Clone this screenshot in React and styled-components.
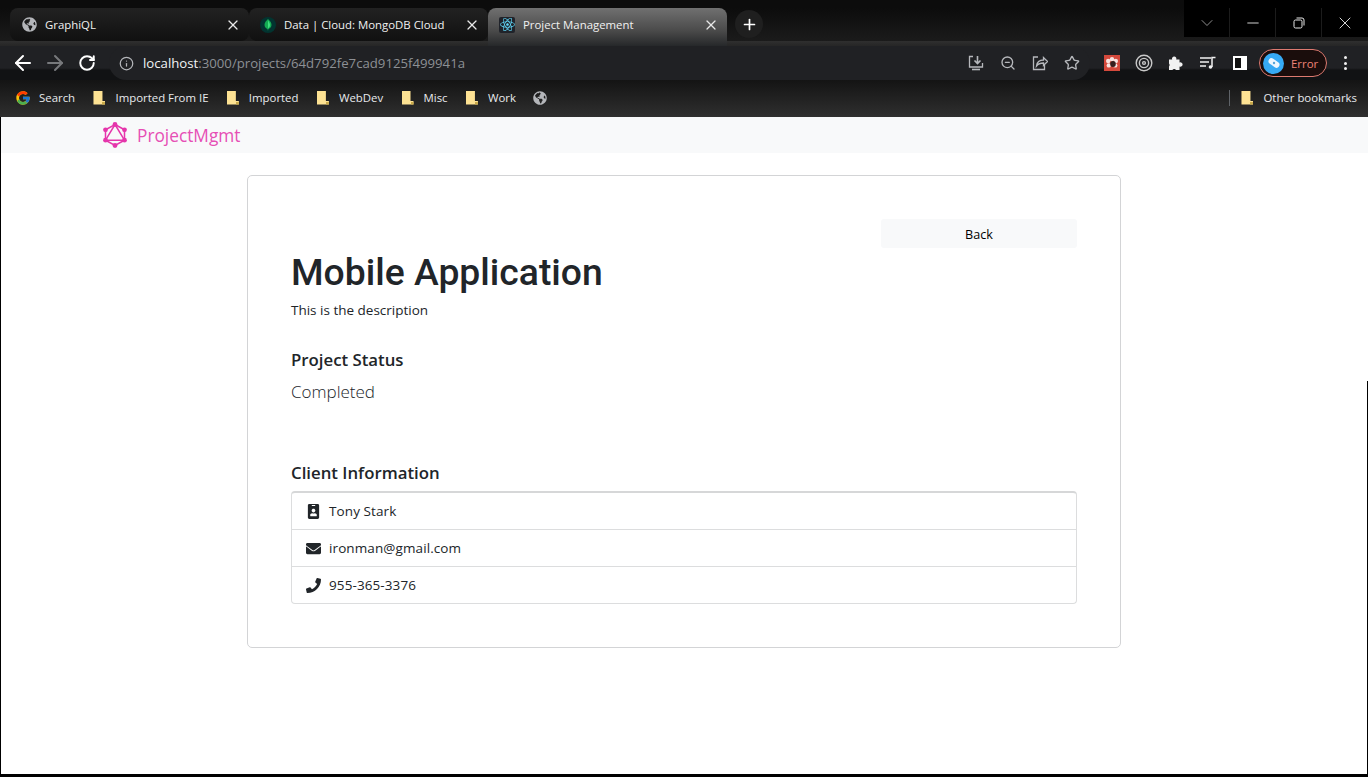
import styled, { createGlobalStyle } from "styled-components";
import { ArrowLeft, ArrowRight, RotateCw, Info, ZoomOut, Star, X, Plus, ChevronDown, Minus } from "lucide-react";
import { FaIdBadge, FaEnvelope, FaPhone, FaReact, FaGlobeAmericas } from "react-icons/fa";
import { FcGoogle } from "react-icons/fc";

const GlobalStyle = createGlobalStyle`
  html, body { margin: 0; padding: 0; background: #000; }
  * { box-sizing: border-box; }
  body { font-family: "Open Sans", "Noto Sans", sans-serif; }
`;

const Frame = styled.div`
  position: relative;
  width: 1368px;
  height: 777px;
  overflow: hidden;
  display: flex;
  flex-direction: column;
  background: #000;
`;

const TabStrip = styled.div`
  height: 46px;
  padding: 8px 0 0 10px;
  display: flex;
  align-items: flex-start;
  background: linear-gradient(#0c0c0c 8px, #1b1b1b 41px, #2f2f2f 41px, #262626 46px);
`;

const Tab = styled.div`
  width: 239px;
  height: ${(p) => (p.$active ? 38 : 33)}px;
  padding: 0 8px ${(p) => (p.$active ? 5 : 0)}px 11px;
  display: flex;
  align-items: center;
  gap: 8px;
  color: #f1f1f1;
  font-size: 11.4px;
  border-radius: 8px 8px ${(p) => (p.$active ? "0 0" : "8px 8px")};
  background: ${(p) =>
    p.$active
      ? "linear-gradient(#707070, #4a4a4a 60%, #26282a)"
      : "linear-gradient(#222222, #101010)"};
`;

const TabTitle = styled.span`
  flex: 1;
  white-space: nowrap;
  overflow: hidden;
`;

const Favicon = styled.span`
  width: 16px;
  height: 16px;
  flex: none;
  display: flex;
  align-items: center;
  justify-content: center;
  border-radius: ${(p) => (p.$round ? "50%" : "2px")};
  background: ${(p) => p.$bg || "transparent"};
  color: ${(p) => p.$color || "#b4b6ba"};
`;

const GlobeBookmark = styled(Favicon)`
  margin-left: -2px;
`;

const NewTab = styled.button`
  width: 28px;
  height: 28px;
  margin: 2px 0 0 8px;
  padding: 0;
  border: 0;
  border-radius: 50%;
  display: flex;
  align-items: center;
  justify-content: center;
  background: #1f1f1f;
  color: #fff;
`;

const WindowControls = styled.div`
  margin-left: auto;
  margin-top: -8px;
  height: 37px;
  padding-top: 8px;
  display: flex;
  background: #000;
  flex: none;
`;

const WindowButton = styled.div`
  width: 46px;
  display: flex;
  align-items: center;
  justify-content: center;
  color: #e8e8e8;
  border-right: ${(p) => (p.$last ? "0" : "1px solid #1c1c1c")};
`;

const RestoreIcon = () => (
  <svg width="12" height="12" viewBox="0 0 12 12" fill="none" stroke="#e8e8e8" strokeWidth="1">
    <rect x="1" y="3" width="8" height="8" rx="1.5" />
    <path d="M3.5 1h5.5a2 2 0 0 1 2 2v5.5" />
  </svg>
);

const Toolbar = styled.div`
  height: 34px;
  padding-left: 7px;
  display: flex;
  align-items: center;
  background: linear-gradient(#202124 22px, #111214 24px);
`;

const NavIcons = styled.div`
  width: 102px;
  display: grid;
  grid-template-columns: repeat(3, 32px);
  justify-items: center;
  align-items: center;
  color: #fff;
  flex: none;
`;

const Omnibox = styled.div`
  width: 981px;
  height: 34px;
  padding: 0 10px;
  border-radius: 17px;
  display: flex;
  align-items: center;
  background: #202124;
  color: #b4b6ba;
  flex: none;
`;

const Url = styled.div`
  margin-left: 9px;
  flex: 1;
  font-size: 13.2px;
  color: #8d9095;
  white-space: nowrap;
`;

const Host = styled.span`
  color: #f1f3f4;
`;

const OmniActions = styled.div`
  display: flex;
  align-items: center;
  gap: 16px;
  color: #b6b8bc;
`;

const ExtIcons = styled.div`
  display: flex;
  align-items: center;
  padding-left: 6px;
  flex: none;
  color: #f1f1f1;
`;

const ExtSlot = styled.span`
  width: 32px;
  display: flex;
  justify-content: center;
  align-items: center;
`;

const ExtBug = styled.span`
  width: 16px;
  height: 16px;
  background: #d4493c;
  display: flex;
  align-items: center;
  justify-content: center;
`;

const ProfileChip = styled.div`
  width: 68px;
  height: 28px;
  margin-left: 3px;
  padding: 0 0 0 3px;
  border-radius: 14px;
  border: 1px solid #dd7a70;
  background: #1a0d0c;
  display: flex;
  align-items: center;
  gap: 7px;
  font-size: 11.4px;
  color: #ee8377;
`;

const Avatar = styled.span`
  width: 21px;
  height: 21px;
  border-radius: 50%;
  background: #36a9f4;
  display: flex;
  align-items: center;
  justify-content: center;
`;

const Dots = styled.div`
  margin-left: 17px;
  display: flex;
  flex-direction: column;
  gap: 2.5px;
`;

const Dot = styled.span`
  width: 3px;
  height: 3px;
  border-radius: 50%;
  background: #f1f1f1;
`;

const Bookmarks = styled.div`
  height: 37px;
  padding: 0 11px 2px 15px;
  display: flex;
  align-items: center;
  font-size: 11.4px;
  color: #e8eaed;
  background: linear-gradient(#141414, #2f2f2f);
`;

const Bookmark = styled.div`
  display: flex;
  align-items: center;
  gap: ${(p) => p.$gap || 10}px;
  margin-right: ${(p) => (p.$end ? 0 : 18.4)}px;
  white-space: nowrap;
`;

const FolderIcon = styled.span`
  position: relative;
  width: 12px;
  height: 14px;
  flex: none;
  background: #fde293;
  clip-path: polygon(0 0, 75% 0, 75% 75%, 100% 75%, 100% 100%, 0 100%);

  &::after {
    content: "";
    position: absolute;
    right: 0;
    bottom: 0;
    width: 3px;
    height: 3px;
    background: #c9a94a;
  }
`;

const BookmarkDivider = styled.span`
  width: 1px;
  height: 16px;
  margin-left: auto;
  margin-right: 11px;
  background: #5f6368;
`;

const Page = styled.div`
  flex: 1;
  margin: 0 0 3px 1px;
  background: #fff;
  display: flex;
  flex-direction: column;
  color: #212529;
`;

const Navbar = styled.nav`
  height: 36px;
  padding-left: 100px;
  display: flex;
  align-items: center;
  gap: 8px;
  background: #f8f9fa;
`;

const BrandName = styled.span`
  font-size: 17.3px;
  color: #e64fb5;
`;

const Card = styled.section`
  width: 874px;
  height: 473px;
  margin: 22px 0 0 246px;
  padding: 43px 43px 0;
  border: 1px solid #d3d4d6;
  border-radius: 5px;
`;

const BackRow = styled.div`
  display: flex;
  justify-content: flex-end;
`;

const BackButton = styled.a`
  width: 196px;
  height: 29px;
  padding-top: 1px;
  border-radius: 3px;
  display: flex;
  align-items: center;
  justify-content: center;
  font-size: 12.6px;
  color: #000;
  background: #f8f9fa;
`;

const Title = styled.h1`
  margin: 0;
  height: 48px;
  font-family: Roboto, "Open Sans", sans-serif;
  font-size: 37.3px;
  line-height: 48px;
  font-weight: 500;
`;

const Description = styled.p`
  margin: 4px 0 0;
  font-size: 13.5px;
  line-height: 20px;
`;

const Heading = styled.h5`
  margin: ${(p) => p.$top}px 0 0;
  font-size: 16.8px;
  line-height: 20px;
  font-weight: 600;
`;

const Status = styled.p`
  margin: 10px 0 0;
  font-size: 17px;
  line-height: 24px;
  font-weight: 300;
`;

const ClientList = styled.ul`
  margin: 8px 0 0;
  padding: 0;
  list-style: none;
  border: 1px solid #dcddde;
  border-top: 2px solid #d6d7d8;
  border-radius: 4px;
`;

const ClientRow = styled.li`
  height: ${(p) => (p.$first ? 36 : 37)}px;
  padding-left: 14px;
  display: flex;
  align-items: center;
  gap: 8px;
  font-size: 13.5px;
  letter-spacing: 0.1px;
  border-top: ${(p) => (p.$first ? "0" : "1px solid #dcddde")};
`;

const RowIcon = styled.span`
  width: 15px;
  display: flex;
  justify-content: center;
  color: #212529;
`;

// right edge of the desktop window peeking through under the browser
const EdgeLine = styled.span`
  position: absolute;
  right: 0;
  top: 381px;
  bottom: 0;
  width: 1px;
  background: #000;
`;

const ShareIcon = () => (
  <svg width="16" height="16" viewBox="0 0 16 16" fill="none" stroke="currentColor" strokeWidth="1.3">
    <path d="M6 2H1.500v12.500h11V10" />
    <path d="M4.500 11c.5-4 3.500-6 7-6V2.500l4 4-4 4V8C8.500 8 6 9 4.500 11z" />
  </svg>
);

const SaveIcon = () => (
  <svg width="16" height="16" viewBox="0 0 16 16" fill="none" stroke="currentColor" strokeWidth="1.3">
    <path d="M5 1.500H1.500V12h13V8" />
    <path d="M9.500 1v7M6.500 5.500l3 3 3-3" strokeWidth="1.6" />
    <path d="M4 14.500h8" strokeWidth="1.6" />
  </svg>
);

const TargetIcon = () => (
  <svg width="18" height="18" viewBox="0 0 18 18" fill="none" stroke="#c9c9c9" strokeWidth="1.4">
    <circle cx="9" cy="9" r="7.800" />
    <circle cx="9" cy="9" r="4.600" />
    <circle cx="9" cy="9" r="1.400" />
  </svg>
);

const PuzzleIcon = () => (
  <svg width="16" height="16" viewBox="0 0 16 16" fill="#f1f1f1">
    <path d="M1 4.500h3.200a2.200 2.200 0 1 1 4 0H11.500v3a2.200 2.200 0 1 1 0 4V15H8a2.200 2.200 0 0 0-3.600 0H1v-3.500a2.200 2.200 0 0 0 0-3z" />
  </svg>
);

const PlaylistIcon = () => (
  <svg width="16" height="14" viewBox="0 0 16 14" fill="none" stroke="#f1f1f1" strokeWidth="1.500">
    <path d="M0 2h11M0 6h9M0 10h6" />
    <path d="M12 11V1.500h3.500" />
    <circle cx="10.500" cy="11" r="1.800" fill="#f1f1f1" stroke="none" />
  </svg>
);

const SidePanelIcon = () => (
  <svg width="14" height="14" viewBox="0 0 14 14">
    <rect width="14" height="14" fill="#fff" />
    <rect x="2" y="2" width="6" height="10" fill="#111" />
  </svg>
);

const BugIcon = () => (
  <svg width="14" height="14" viewBox="0 0 14 14">
    <g fill="#f7e3e0">
      <circle cx="7" cy="3.200" r="2.200" />
      <circle cx="3.200" cy="5" r="2.200" />
      <circle cx="10.800" cy="5" r="2.200" />
      <circle cx="3.800" cy="9.400" r="2.200" />
      <circle cx="10.200" cy="9.400" r="2.200" />
    </g>
    <ellipse cx="8" cy="8" rx="2.800" ry="3" fill="#35201f" />
  </svg>
);

const PillIcon = () => (
  <svg width="14" height="14" viewBox="0 0 14 14">
    <rect x="1" y="4" width="12" height="6" rx="3" fill="#eef7fe" transform="rotate(35 7 7)" />
    <circle cx="7" cy="7" r="1.200" fill="#5aa4d8" />
  </svg>
);

const LeafIcon = () => (
  <svg width="8" height="12" viewBox="0 0 8 12">
    <path d="M4 0c2 2 3.500 3.600 3.500 6S5.500 9.500 4.300 10.200L4 12l-.4-1.800C2.400 9.500.5 8.400.5 6S2 2 4 0z" fill="#13aa52" />
    <path d="M4 1.500c1 1.500 2 2.700 2 4.500S5 8.500 4 9.500z" fill="#3fe07f" />
  </svg>
);

const Logo = () => (
  <svg width="28" height="28" viewBox="0 0 28 28" fill="none" stroke="#e535ab" strokeWidth="1.500">
    <path d="M14 3.500L23.500 8.800V19.200L14 24.500L4.500 19.200V8.800z" />
    <path d="M14 3.500L23.500 19.200H4.500z" />
    <g fill="#e535ab" stroke="none">
      <circle cx="14" cy="3.500" r="2.400" />
      <circle cx="23.500" cy="8.800" r="2.400" />
      <circle cx="23.500" cy="19.200" r="2.400" />
      <circle cx="14" cy="24.500" r="2.400" />
      <circle cx="4.500" cy="19.200" r="2.400" />
      <circle cx="4.500" cy="8.800" r="2.400" />
    </g>
  </svg>
);

const bookmarks = ["Imported From IE", "Imported", "WebDev", "Misc", "Work"];

const App = () => {
  return (
    <Frame>
      <GlobalStyle />
      <TabStrip>
        <Tab>
          <Favicon>
            <FaGlobeAmericas size={15} />
          </Favicon>
          <TabTitle>GraphiQL</TabTitle>
          <X size={16} strokeWidth={1.8} color="#e8e8e8" />
        </Tab>
        <Tab>
          <Favicon $bg="#023430" $round>
            <LeafIcon />
          </Favicon>
          <TabTitle>Data | Cloud: MongoDB Cloud</TabTitle>
          <X size={16} strokeWidth={1.8} color="#e8e8e8" />
        </Tab>
        <Tab $active>
          <Favicon $bg="#20232a" $color="#61dafb">
            <FaReact size={15} />
          </Favicon>
          <TabTitle>Project Management</TabTitle>
          <X size={16} strokeWidth={1.8} color="#e8e8e8" />
        </Tab>
        <NewTab>
          <Plus size={17} strokeWidth={2.4} />
        </NewTab>
        <WindowControls>
          <WindowButton>
            <ChevronDown size={20} strokeWidth={1} color="#aaaaaa" />
          </WindowButton>
          <WindowButton>
            <Minus size={18} strokeWidth={1.2} />
          </WindowButton>
          <WindowButton>
            <RestoreIcon />
          </WindowButton>
          <WindowButton $last>
            <X size={20} strokeWidth={1.1} />
          </WindowButton>
        </WindowControls>
      </TabStrip>

      <Toolbar>
        <NavIcons>
          <ArrowLeft size={24} strokeWidth={2} />
          <ArrowRight size={24} strokeWidth={2} color="#77797c" />
          <RotateCw size={18} strokeWidth={2.6} />
        </NavIcons>
        <Omnibox>
          <Info size={15} />
          <Url>
            <Host>localhost</Host>:3000/projects/64d792fe7cad9125f499941a
          </Url>
          <OmniActions>
            <SaveIcon />
            <ZoomOut size={16} />
            <ShareIcon />
            <Star size={16} />
          </OmniActions>
        </Omnibox>
        <ExtIcons>
          <ExtSlot>
            <ExtBug>
              <BugIcon />
            </ExtBug>
          </ExtSlot>
          <ExtSlot>
            <TargetIcon />
          </ExtSlot>
          <ExtSlot>
            <PuzzleIcon />
          </ExtSlot>
          <ExtSlot>
            <PlaylistIcon />
          </ExtSlot>
          <ExtSlot>
            <SidePanelIcon />
          </ExtSlot>
          <ProfileChip>
            <Avatar>
              <PillIcon />
            </Avatar>
            Error
          </ProfileChip>
          <Dots>
            <Dot />
            <Dot />
            <Dot />
          </Dots>
        </ExtIcons>
      </Toolbar>

      <Bookmarks>
        <Bookmark $gap={8}>
          <FcGoogle size={16} />
          Search
        </Bookmark>
        {bookmarks.map((name) => (
          <Bookmark key={name}>
            <FolderIcon />
            {name}
          </Bookmark>
        ))}
        <GlobeBookmark>
          <FaGlobeAmericas size={14} />
        </GlobeBookmark>
        <BookmarkDivider />
        <Bookmark $end>
          <FolderIcon />
          Other bookmarks
        </Bookmark>
      </Bookmarks>

      <Page>
        <Navbar>
          <Logo />
          <BrandName>ProjectMgmt</BrandName>
        </Navbar>
        <Card>
          <BackRow>
            <BackButton>Back</BackButton>
          </BackRow>
          <Title>Mobile Application</Title>
          <Description>This is the description</Description>
          <Heading $top={30}>Project Status</Heading>
          <Status>Completed</Status>
          <Heading $top={59}>Client Information</Heading>
          <ClientList>
            <ClientRow $first>
              <RowIcon>
                <FaIdBadge size={15} />
              </RowIcon>
              Tony Stark
            </ClientRow>
            <ClientRow>
              <RowIcon>
                <FaEnvelope size={15} />
              </RowIcon>
              ironman@gmail.com
            </ClientRow>
            <ClientRow>
              <RowIcon>
                <FaPhone size={15} />
              </RowIcon>
              955-365-3376
            </ClientRow>
          </ClientList>
        </Card>
      </Page>
      <EdgeLine />
    </Frame>
  );
};

export default App;
